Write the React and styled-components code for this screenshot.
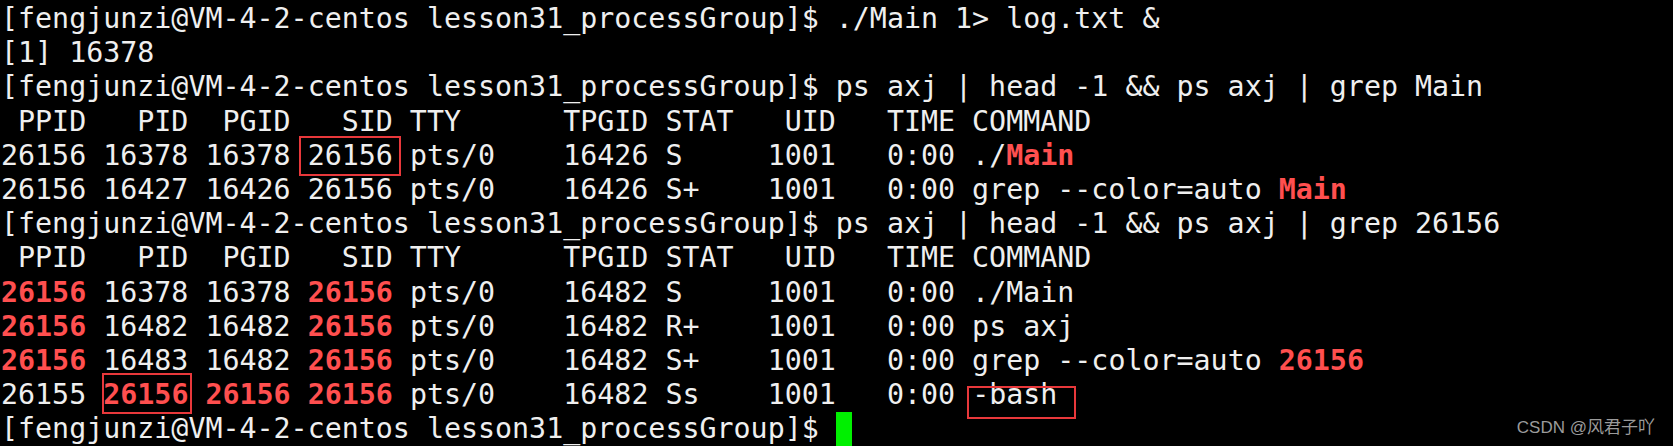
import React from "react";
import styled, { createGlobalStyle } from "styled-components";

const GlobalStyle = createGlobalStyle`
    html, body {
        margin: 0;
        padding: 0;
        background: #000;
    }
`;

const Terminal = styled.div`
    position: relative;
    width: 1673px;
    height: 446px;
    overflow: hidden;
    background: #000;
    color: #efefef;
    font-family: "DejaVu Sans Mono", "Liberation Mono", monospace;
    font-size: 28.3px;
    white-space: pre;
    padding: 2px 0 0 1px;
    box-sizing: border-box;
`;

const Line = styled.div`
    height: 34.2px;
    line-height: 34.2px;
`;

const Hi = styled.span`
    color: #ff4f4f;
    font-weight: 700;
`;

// red annotation frame drawn over a word
const Boxed = styled.span`
    position: relative;
    &::after {
        content: "";
        position: absolute;
        left: ${(p) => p.$l}px;
        right: ${(p) => p.$r}px;
        top: ${(p) => p.$t}px;
        bottom: ${(p) => p.$b}px;
        border: 2px solid #e8383b;
    }
`;

const Cursor = styled.span`
    display: inline-block;
    width: 16px;
    height: 37px;
    background: #00f000;
    vertical-align: top;
`;

const Watermark = styled.div`
    position: absolute;
    right: 18px;
    bottom: 8px;
    font-family: "Liberation Sans", "Noto Sans CJK SC", sans-serif;
    font-size: 17px;
    color: #9b9b9b;
    white-space: pre;
`;

const prompt = "[fengjunzi@VM-4-2-centos lesson31_processGroup]$ ";
const header = " PPID   PID  PGID   SID TTY      TPGID STAT   UID   TIME COMMAND";

const App = () => {
    return (
        <>
            <GlobalStyle />
            <Terminal>
                <Line>{prompt}./Main 1&gt; log.txt &amp;</Line>
                <Line>[1] 16378</Line>
                <Line>{prompt}ps axj | head -1 &amp;&amp; ps axj | grep Main</Line>
                <Line>{header}</Line>
                <Line>
                    26156 16378 16378{" "}
                    <Boxed $l={-9} $r={-8} $t={-3} $b={-4}>
                        26156
                    </Boxed>{" "}
                    pts/0    16426 S     1001   0:00 ./<Hi>Main</Hi>
                </Line>
                <Line>
                    26156 16427 16426 26156 pts/0    16426 S+    1001   0:00
                    grep --color=auto <Hi>Main</Hi>
                </Line>
                <Line>{prompt}ps axj | head -1 &amp;&amp; ps axj | grep 26156</Line>
                <Line>{header}</Line>
                <Line>
                    <Hi>26156</Hi> 16378 16378 <Hi>26156</Hi> pts/0    16482 S     1001   0:00 ./Main
                </Line>
                <Line>
                    <Hi>26156</Hi> 16482 16482 <Hi>26156</Hi> pts/0    16482 R+    1001   0:00 ps axj
                </Line>
                <Line>
                    <Hi>26156</Hi> 16483 16482 <Hi>26156</Hi> pts/0    16482 S+    1001   0:00
                    grep --color=auto <Hi>26156</Hi>
                </Line>
                <Line>
                    26155{" "}
                    <Boxed $l={-1} $r={-4} $t={-5} $b={-3}>
                        <Hi>26156</Hi>
                    </Boxed>{" "}
                    <Hi>26156</Hi> <Hi>26156</Hi> pts/0    16482 Ss    1001   0:00{" "}
                    <Boxed $l={-5} $r={-19} $t={8} $b={-8}>
                        -bash
                    </Boxed>
                </Line>
                <Line>
                    {prompt}
                    <Cursor />
                </Line>
                <Watermark>CSDN @风君子吖</Watermark>
            </Terminal>
        </>
    );
};

export default App;
